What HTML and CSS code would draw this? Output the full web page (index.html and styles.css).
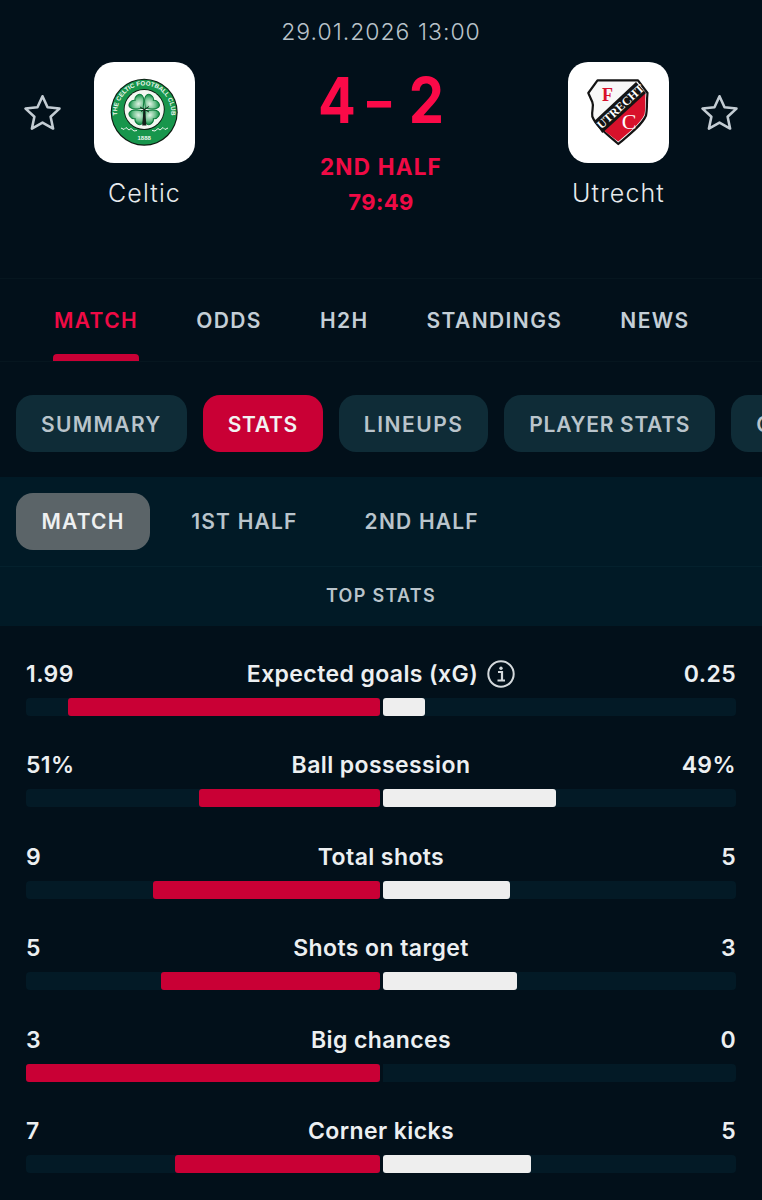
FILE: index.html
```html
<!DOCTYPE html>
<html lang="en">
<head>
<meta charset="utf-8">
<title>Celtic vs Utrecht</title>
<link rel="stylesheet" href="styles.css">
</head>
<body>
<div class="page">
  <header class="match-header">
    <div class="date">29.01.2026 13:00</div>
    <div class="match-grid">
      <div class="team team-home">
        <svg class="star" viewBox="1 1 36 36"><path d="M19 3.200l4.900 10.700 11.600 1.300-8.600 7.900 2.400 11.500L19 28.800 8.700 34.600l2.400-11.500-8.600-7.900 11.600-1.300z" fill="none" stroke="#c3ccd3" stroke-width="2.500" stroke-linejoin="round"/></svg>
        <div class="club">
          <div class="logo">
            <svg viewBox="0 0 101 101" width="101" height="101">
              <defs>
                <path id="ringTop" d="M27.200 64.500A27 27 0 1 1 73.200 64.500"/>
                <radialGradient id="leaf" cx="50%" cy="50%" r="60%">
                  <stop offset="0" stop-color="#dff2e4"/>
                  <stop offset=".6" stop-color="#6cc08c"/>
                  <stop offset="1" stop-color="#0e8c45"/>
                </radialGradient>
                <path id="cloverLeaf" d="M0-1C-1.500-4-8-6-8.500-11C-9-15.500-2.500-16.500 0-13C2.500-16.500 9-15.500 8.500-11C8-6 1.500-4 0-1Z" fill="url(#leaf)" stroke="#0a7a3a" stroke-width="1"/>
              </defs>
              <circle cx="50.200" cy="50.200" r="33.500" fill="#0c1a10"/>
              <circle cx="50.200" cy="50.200" r="32.400" fill="#17964c"/>
              <circle cx="50.200" cy="47.500" r="20.500" fill="#0b1a10"/>
              <circle cx="50.200" cy="47.500" r="19.600" fill="#f3f7f2"/>
              <use href="#cloverLeaf" transform="translate(50.200 47.500) rotate(45)"/>
              <use href="#cloverLeaf" transform="translate(50.200 47.500) rotate(135)"/>
              <use href="#cloverLeaf" transform="translate(50.200 47.500) rotate(225)"/>
              <use href="#cloverLeaf" transform="translate(50.200 47.500) rotate(315)"/>
              <path d="M49.500 48h1.600l1.300 15.500h-4.200z" fill="#14201a"/>
              <path d="M46 45l9 5M55 44.500l-8 5" stroke="#14201a" stroke-width=".9"/>
              <text class="ring-text"><textPath href="#ringTop" startOffset="50%" text-anchor="middle">THE CELTIC FOOTBALL CLUB</textPath></text>
              <path d="M27 66l3 1.500 2-2 3 2.500 2-1.500 3 2.500 3-.5M74 66l-3 1.500-2-2-3 2.500-2-1.500-3 2.500-3-.5" fill="none" stroke="#eef6ef" stroke-width="1"/>
              <text class="ring-year" x="50.200" y="78" text-anchor="middle">1888</text>
            </svg>
          </div>
          <div class="team-name">Celtic</div>
        </div>
      </div>
      <div class="score-col">
        <div class="score"><span class="digit">4</span><span class="dash">-</span><span class="digit">2</span></div>
        <div class="status">2ND HALF</div>
        <div class="clock">79:49</div>
      </div>
      <div class="team team-away">
        <div class="club">
          <div class="logo">
            <svg viewBox="0 0 101 101" width="101" height="101">
              <path d="M29.500 18.300H70L79.500 31c-1 9 0 16-1.500 22.500C74 63 61 73 50.300 82 40 73 28 64 24.300 54.500c-1-6 2-10 0-14.500l-4-9z" fill="#f8f8f8" stroke="#141414" stroke-width="2.200" stroke-linejoin="round"/>
              <path d="M77.500 31c-.5 8 .2 16-1 21.500C72 62 60 71 50.300 79.500 45 75.500 39 71 34 67z" fill="#d8112b"/>
              <path d="M26 59.300L68 20 78 31 34.300 71z" fill="#141414"/>
              <text class="band-text" transform="translate(33.500 67.500) rotate(-42.700)">UTRECHT</text>
              <text class="crest-f" x="39.500" y="38.500" text-anchor="middle">F</text>
              <text class="crest-c" x="61" y="66.500" text-anchor="middle">C</text>
            </svg>
          </div>
          <div class="team-name">Utrecht</div>
        </div>
        <svg class="star" viewBox="1 1 36 36"><path d="M19 3.200l4.900 10.700 11.600 1.300-8.600 7.900 2.400 11.500L19 28.800 8.700 34.600l2.400-11.500-8.600-7.900 11.600-1.300z" fill="none" stroke="#c3ccd3" stroke-width="2.500" stroke-linejoin="round"/></svg>
      </div>
    </div>
  </header>

  <nav class="tabs">
    <a class="tab tab-active">MATCH</a>
    <a class="tab">ODDS</a>
    <a class="tab">H2H</a>
    <a class="tab">STANDINGS</a>
    <a class="tab">NEWS</a>
  </nav>

  <div class="pills">
    <a class="pill pill-summary">SUMMARY</a>
    <a class="pill pill-active">STATS</a>
    <a class="pill pill-lineups">LINEUPS</a>
    <a class="pill pill-player">PLAYER STATS</a>
    <a class="pill">COMMENTARY</a>
  </div>

  <div class="filters">
    <a class="filter filter-active">MATCH</a>
    <a class="filter">1ST HALF</a>
    <a class="filter">2ND HALF</a>
  </div>

  <div class="section-title">TOP STATS</div>

  <section class="stats">
    <div class="stat">
      <div class="stat-head"><span>1.99</span><span class="stat-label">Expected goals (xG)
        <svg class="info" viewBox="0 0 28 28"><circle cx="14" cy="14" r="12.700" fill="none" stroke="#d4d9dc" stroke-width="2"/><path d="M11 12h4v8M10.500 20.500h7.500" fill="none" stroke="#d4d9dc" stroke-width="2.200"/><circle cx="14" cy="8.300" r="1.700" fill="#d4d9dc"/></svg>
      </span><span>0.25</span></div>
      <div class="bars">
        <div class="track track-l"><div class="fill fill-l" style="width:88.1%"></div></div>
        <div class="track track-r"><div class="fill fill-r" style="width:11.900%"></div></div>
      </div>
    </div>
    <div class="stat">
      <div class="stat-head"><span>51%</span><span class="stat-label">Ball possession</span><span>49%</span></div>
      <div class="bars">
        <div class="track track-l"><div class="fill fill-l" style="width:51.100%"></div></div>
        <div class="track track-r"><div class="fill fill-r" style="width:49%"></div></div>
      </div>
    </div>
    <div class="stat">
      <div class="stat-head"><span>9</span><span class="stat-label">Total shots</span><span>5</span></div>
      <div class="bars">
        <div class="track track-l"><div class="fill fill-l" style="width:64.100%"></div></div>
        <div class="track track-r"><div class="fill fill-r" style="width:36%"></div></div>
      </div>
    </div>
    <div class="stat">
      <div class="stat-head"><span>5</span><span class="stat-label">Shots on target</span><span>3</span></div>
      <div class="bars">
        <div class="track track-l"><div class="fill fill-l" style="width:61.900%"></div></div>
        <div class="track track-r"><div class="fill fill-r" style="width:38%"></div></div>
      </div>
    </div>
    <div class="stat">
      <div class="stat-head"><span>3</span><span class="stat-label">Big chances</span><span>0</span></div>
      <div class="bars">
        <div class="track track-l"><div class="fill fill-l" style="width:100%"></div></div>
        <div class="track track-r"></div>
      </div>
    </div>
    <div class="stat">
      <div class="stat-head"><span>7</span><span class="stat-label">Corner kicks</span><span>5</span></div>
      <div class="bars">
        <div class="track track-l"><div class="fill fill-l" style="width:57.900%"></div></div>
        <div class="track track-r"><div class="fill fill-r" style="width:41.900%"></div></div>
      </div>
    </div>
  </section>
</div>
</body>
</html>
```
FILE: styles.css
```css
* { box-sizing: border-box; }
html, body { margin: 0; padding: 0; background: #02101a; }
body { font-family: Inter, "Noto Sans", sans-serif; color: #eef1f3; }
.page { width: 762px; height: 1200px; overflow: hidden; background: #02101a; }

.match-header { height: 278px; padding-top: 18px; }
.date { text-align: center; font-size: 23px; line-height: 28px; font-weight: 300; color: #b9c3ca; letter-spacing: 1px; }
.match-grid { display: grid; grid-template-columns: 1fr auto 1fr; margin-top: 16px; }
.team { display: flex; align-items: flex-start; gap: 33px; }
.team-home { padding-left: 24px; }
.team-away { justify-content: flex-end; padding-right: 24px; gap: 32px; }
.star { width: 37px; height: 37px; margin-top: 32px; flex: none; }
.club { width: 101px; display: flex; flex-direction: column; align-items: center; }
.logo { width: 101px; height: 101px; border-radius: 20px; background: #fff; overflow: hidden; }
.logo svg { display: block; }
.team-name { margin-top: 13px; font-size: 25px; line-height: 34px; font-weight: 300; letter-spacing: 1.100px; color: #e6eaed; white-space: nowrap; }
.ring-text { font-family: "Liberation Sans", sans-serif; font-size: 6.200px; font-weight: 700; fill: #eef6ef; }
.ring-year { font-family: "Liberation Sans", sans-serif; font-size: 6px; font-weight: 700; fill: #eef6ef; }
.band-text { font-family: "Liberation Serif", serif; font-size: 12px; font-weight: 700; fill: #fff; }
.crest-f { font-family: "Liberation Serif", serif; font-size: 18px; font-weight: 700; fill: #d8112b; }
.crest-c { font-family: "Liberation Serif", serif; font-size: 22px; font-weight: 400; fill: #fff; }

.score-col { width: 124px; display: flex; flex-direction: column; align-items: center; color: #f00a45; }
.score { display: flex; justify-content: space-between; align-items: center; width: 126px; height: 72px; font-size: 56px; line-height: 72px; font-weight: 700; margin-top: 3px; color: #fb0a48; }
.digit { display: inline-block; transform: scaleY(1.120); }
.dash { display: inline-block; transform: translateX(-3px) scaleX(1.300); }
.status { margin-top: 15px; font-size: 22.500px; line-height: 30px; font-weight: 700; letter-spacing: 1.200px; white-space: nowrap; }
.clock { margin-top: 5px; font-size: 22px; line-height: 30px; font-weight: 700; letter-spacing: .4px; }

.tabs { height: 84px; display: flex; gap: 58px; padding: 2px 0 0 54px; align-items: center; border-top: 1px solid #06161f; border-bottom: 1px solid #06161f; }
.tab { position: relative; font-size: 21px; font-weight: 600; letter-spacing: 1.400px; color: #c4ced6; line-height: 26px; }
.tab-active { color: #f00a45; }
.tab-active::after { content: ""; position: absolute; left: -1px; right: -1px; top: 46px; height: 7px; border-radius: 4px 4px 0 0; background: #c90035; }

.pills { height: 115px; display: flex; gap: 16px; padding: 33px 0 0 16px; overflow: hidden; }
.pill { flex: none; height: 57px; padding: 1px 25px 0; display: flex; align-items: center; border-radius: 17px; background: #0f2c37; color: #b9c4cb; font-size: 21px; font-weight: 600; letter-spacing: 1.200px; }
.pill-summary { letter-spacing: 1.350px; }
.pill-lineups { letter-spacing: 1.500px; }
.pill-player { letter-spacing: .700px; }
.pill-active { background: #c90035; color: #f2f2f2; letter-spacing: .700px; }

.filters { height: 90px; display: flex; gap: 15px; padding: 16px 0 0 16px; background: #011a26; border-bottom: 1px solid #04212d; }
.filter { height: 57px; padding: 0 26px; display: flex; align-items: center; border-radius: 17px; color: #b9c4cb; font-size: 21px; font-weight: 600; letter-spacing: 1.200px; }
.filter-active { padding: 0 25.500px; background: #5b6468; color: #eef0f1; }

.section-title { height: 59px; padding-bottom: 2px; display: flex; align-items: center; justify-content: center; background: #011a26; color: #b9c4cb; font-size: 18px; font-weight: 600; letter-spacing: 1.300px; }

.stats { display: flex; flex-direction: column; gap: 34.400px; padding: 33px 26px 0; }
.stat-head { height: 30px; display: flex; align-items: center; justify-content: space-between; position: relative; font-size: 23px; font-weight: 600; letter-spacing: .4px; color: #eceff1; }
.stat-label { position: absolute; left: 0; right: 0; display: flex; justify-content: center; align-items: center; gap: 9px; }
.info { width: 28px; height: 28px; flex: none; }
.bars { display: flex; gap: 3px; margin-top: 9px; }
.track { flex: 1 1 0; height: 18px; display: flex; background: #031a26; }
.track-l { justify-content: flex-end; border-radius: 4px 0 0 4px; }
.track-r { border-radius: 0 4px 4px 0; }
.fill { height: 18px; border-radius: 3px; }
.fill-l { background: #c90035; }
.fill-r { background: #eeeeee; }
```
